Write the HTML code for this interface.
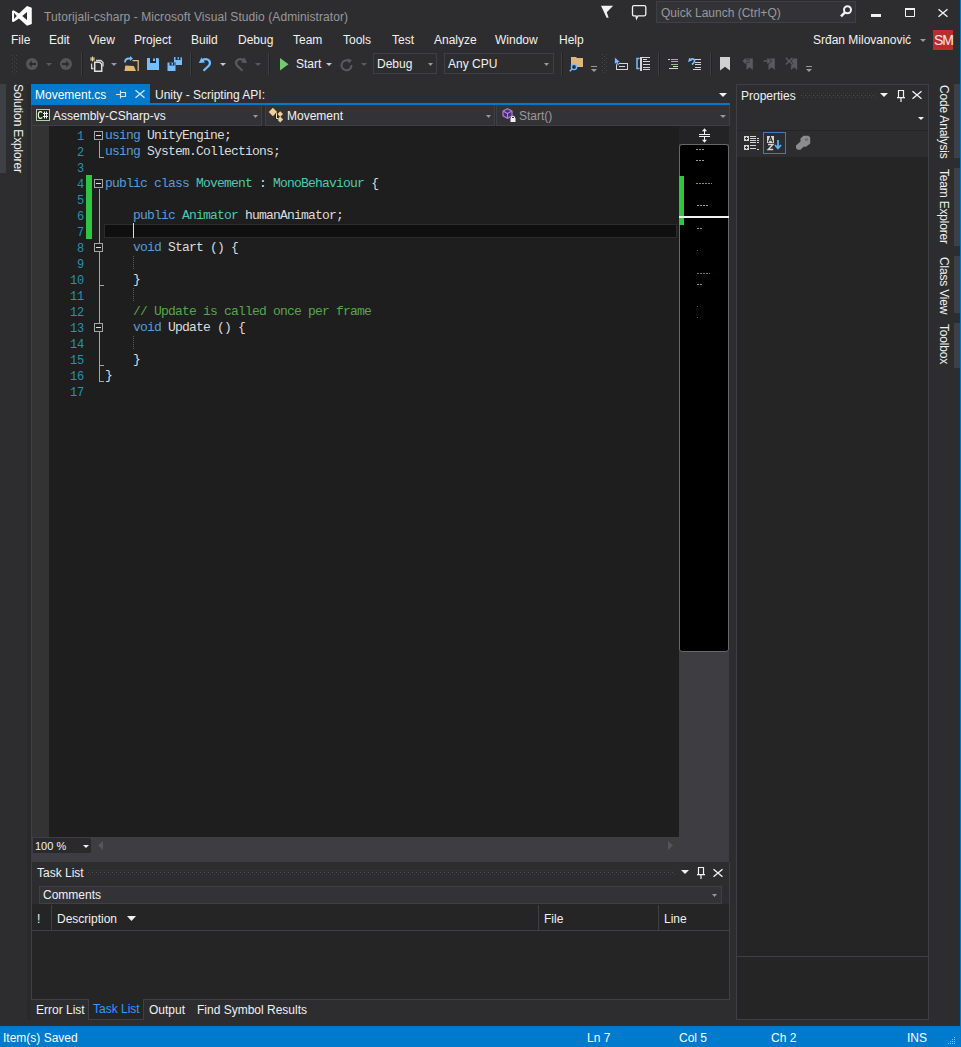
<!DOCTYPE html>
<html><head><meta charset="utf-8">
<style>
*{margin:0;padding:0;box-sizing:border-box}
html,body{width:961px;height:1047px;overflow:hidden;background:#2D2D30}
body{position:relative;font-family:"Liberation Sans",sans-serif;font-size:12px;color:#F1F1F1}
.a{position:absolute}
.t{position:absolute;white-space:pre;line-height:14px;font-size:12px}
svg{position:absolute;overflow:visible}
.code{position:absolute;font-family:"Liberation Mono",monospace;font-size:13px;letter-spacing:-0.8px;line-height:16px;color:#DCDCDC}
.code div{white-space:pre;height:16px}
.kw{color:#569CD6}.ty{color:#4EC9B0}.cm{color:#57A64A}
.ln{position:absolute;font-family:"Liberation Mono",monospace;font-size:12px;letter-spacing:-0.2px;line-height:16px;color:#2B91AF;text-align:right;width:40px;white-space:pre}
.vt{position:absolute;white-space:pre;font-size:12px;line-height:14px;transform-origin:0 0;transform:rotate(90deg)}
</style></head><body>
<svg style="left:10px;top:4px" width="24" height="24" viewBox="0 0 24 24"><path fill="#fff" fill-rule="evenodd" d="M17 2.1L21.75 3.75V20L17 21.75L9 14.5L3.5 18L2 17.5V7L3.5 6.25L9 9.5ZM4.1 8.75V15L6.75 12ZM17 8V16L12.25 12Z"/></svg>
<div class="t" style="left:44px;top:10px;color:#999999;letter-spacing:0.08px">Tutorijali-csharp - Microsoft Visual Studio (Administrator)</div>
<svg style="left:596px;top:0px" width="20" height="20" viewBox="0 0 20 20"><path d="M5 5.8H17.2L10.8 12.3L12.6 17.8H10.6L7.6 11.2Z" fill="#F1F1F1"/></svg>
<svg style="left:630px;top:3px" width="18" height="18" viewBox="0 0 18 18"><path d="M4 2.7H14.3Q15.8 2.7 15.8 4.2V11.3Q15.8 12.8 14.3 12.8H8L6.5 15.6L6 12.8H4Q2.5 12.8 2.5 11.3V4.2Q2.5 2.7 4 2.7Z" fill="none" stroke="#F1F1F1" stroke-width="1.3"/></svg>
<div class="a" style="left:656px;top:1px;width:200px;height:22px;border:1px solid #3F3F46;background:#333337;"></div>
<div class="t" style="left:661px;top:6px;color:#999999;">Quick Launch (Ctrl+Q)</div>
<svg style="left:838px;top:5px" width="15" height="15" viewBox="0 0 15 15"><circle cx="9.5" cy="4.7" r="3.5" fill="none" stroke="#F1F1F1" stroke-width="2"/><path d="M7.2 7.2L3 11.4" stroke="#F1F1F1" stroke-width="2.6"/></svg>
<div class="a" style="left:871px;top:14px;width:10px;height:3px;background:#F1F1F1;"></div>
<svg style="left:905px;top:8px" width="10" height="9" viewBox="0 0 10 9"><path d="M0.5 1V8.5H9.5V1" fill="none" stroke="#F1F1F1" stroke-width="1"/><rect x="0" y="0" width="10" height="2" fill="#F1F1F1"/></svg>
<svg style="left:938px;top:9px" width="10" height="8" viewBox="0 0 10 8"><path d="M0.5 0.3L9.5 7.7M9.5 0.3L0.5 7.7" stroke="#F1F1F1" stroke-width="1.4"/></svg>
<div class="t" style="left:11px;top:33px;color:#F1F1F1;">File</div>
<div class="t" style="left:49px;top:33px;color:#F1F1F1;">Edit</div>
<div class="t" style="left:89px;top:33px;color:#F1F1F1;">View</div>
<div class="t" style="left:134px;top:33px;color:#F1F1F1;">Project</div>
<div class="t" style="left:191px;top:33px;color:#F1F1F1;">Build</div>
<div class="t" style="left:238px;top:33px;color:#F1F1F1;">Debug</div>
<div class="t" style="left:293px;top:33px;color:#F1F1F1;">Team</div>
<div class="t" style="left:343px;top:33px;color:#F1F1F1;">Tools</div>
<div class="t" style="left:392px;top:33px;color:#F1F1F1;">Test</div>
<div class="t" style="left:434px;top:33px;color:#F1F1F1;">Analyze</div>
<div class="t" style="left:495px;top:33px;color:#F1F1F1;">Window</div>
<div class="t" style="left:559px;top:33px;color:#F1F1F1;">Help</div>
<div class="t" style="left:813px;top:33px;color:#F1F1F1;">Srđan Milovanović</div>
<svg style="left:920px;top:39px" width="6" height="3" viewBox="0 0 6 3"><path d="M0 0H6L3.0 3Z" fill="#999999"/></svg>
<div class="a" style="left:933px;top:30px;width:20px;height:20px;background:#BC2C2E;"></div>
<div class="t" style="left:934px;top:32px;color:#F6E9E9;font-size:14px;line-height:16px;letter-spacing:-1.2px">SM</div>
<svg style="left:12px;top:55px" width="5" height="18" viewBox="0 0 5 18"><g fill="#46464A"><rect x="0" y="0" width="1" height="1"/><rect x="2" y="2" width="1" height="1"/><rect x="4" y="0" width="1" height="1"/><rect x="0" y="4" width="1" height="1"/><rect x="2" y="6" width="1" height="1"/><rect x="4" y="4" width="1" height="1"/><rect x="0" y="8" width="1" height="1"/><rect x="2" y="10" width="1" height="1"/><rect x="4" y="8" width="1" height="1"/><rect x="0" y="12" width="1" height="1"/><rect x="2" y="14" width="1" height="1"/><rect x="4" y="12" width="1" height="1"/><rect x="0" y="16" width="1" height="1"/><rect x="2" y="18" width="1" height="1"/><rect x="4" y="16" width="1" height="1"/></g></svg>
<svg style="left:26px;top:58px" width="12" height="12" viewBox="0 0 12 12"><circle cx="6" cy="6" r="6" fill="#555558"/><path d="M2.5 6L6 2.8V9.2Z" fill="#2D2D30"/><rect x="5.5" y="5" width="4.5" height="2" fill="#2D2D30"/></svg>
<svg style="left:46px;top:63px" width="6" height="3" viewBox="0 0 6 3"><path d="M0 0H6L3.0 3Z" fill="#5A5A5E"/></svg>
<svg style="left:60px;top:58px" width="12" height="12" viewBox="0 0 12 12"><circle cx="6" cy="6" r="6" fill="#555558"/><path d="M9.5 6L6 2.8V9.2Z" fill="#2D2D30"/><rect x="2" y="5" width="4.5" height="2" fill="#2D2D30"/></svg>
<div class="a" style="left:81px;top:53px;width:1px;height:22px;background:#3F3F46;"></div>
<div class="a" style="left:82px;top:53px;width:1px;height:22px;background:#222225;"></div>
<svg style="left:89px;top:56px" width="15" height="16" viewBox="0 0 15 16"><path d="M3.5 0.5V5.5M1 3H6M1.7 1.2L5.3 4.8M5.3 1.2L1.7 4.8" stroke="#E8D9A0" stroke-width="1"/><path d="M7 4.5H12L14 6.5V10.5" fill="none" stroke="#D4D4D4" stroke-width="1.3"/><path d="M2.6 7.5V12.5H4.5" fill="none" stroke="#D4D4D4" stroke-width="1.3"/><path d="M5.7 6.3H10.7L12.7 8.3V15.2H5.7Z" fill="#2D2D30" stroke="#E0E0E0" stroke-width="1.5"/></svg>
<svg style="left:111px;top:63px" width="6" height="3" viewBox="0 0 6 3"><path d="M0 0H6L3.0 3Z" fill="#9A94B8"/></svg>
<svg style="left:123px;top:56px" width="16" height="16" viewBox="0 0 16 16"><path d="M2 6.5Q2 2.5 6 2.5H7.5" fill="none" stroke="#75BEFF" stroke-width="1.8"/><path d="M7 0L10 2.5L7 5Z" fill="#75BEFF"/><path d="M9.5 4.6H15.2V15" fill="none" stroke="#DCB67A" stroke-width="1.3"/><path d="M1.5 15L2.3 9.4L10.8 10L13 15Z" fill="#E3B56F"/></svg>
<svg style="left:147px;top:58px" width="12" height="12" viewBox="0 0 12 12"><path d="M0 0H11L12 1V12H0Z" fill="#75BEFF"/><rect x="3" y="0" width="6" height="5" fill="#1E2A38"/><rect x="6" y="0.5" width="2" height="2.5" fill="#75BEFF"/></svg>
<svg style="left:167px;top:57px" width="16" height="14" viewBox="0 0 16 14"><path d="M7 0H14L15 1V8H9V5.5H7Z" fill="#75BEFF"/><rect x="8.5" y="0" width="5" height="3" fill="#1E2A38"/><rect x="10.5" y="0.3" width="1.5" height="2" fill="#75BEFF"/><path d="M0.5 5.5H8.5V14H0.5Z" fill="#75BEFF"/><rect x="2.5" y="5.5" width="5" height="3" fill="#1E2A38"/><rect x="4.5" y="5.8" width="1.5" height="2" fill="#75BEFF"/></svg>
<div class="a" style="left:190px;top:53px;width:1px;height:22px;background:#3F3F46;"></div>
<div class="a" style="left:191px;top:53px;width:1px;height:22px;background:#222225;"></div>
<svg style="left:198px;top:57px" width="14" height="14" viewBox="0 0 14 14"><path d="M4 3.3Q8.5 1 11 3.5Q13 6 11 8.5L5.5 13.8" fill="none" stroke="#75BEFF" stroke-width="2.2"/><path d="M0.8 6L3.5 0.5L7 5.5Z" fill="#75BEFF"/></svg>
<svg style="left:220px;top:63px" width="6" height="3" viewBox="0 0 6 3"><path d="M0 0H6L3.0 3Z" fill="#C8C8C8"/></svg>
<svg style="left:234px;top:57px" width="14" height="14" viewBox="0 0 14 14"><path d="M10 3.3Q5.5 1 3 3.5Q1 6 3 8.5L8.5 13.8" fill="none" stroke="#5A5A5E" stroke-width="2.2"/><path d="M13.2 6L10.5 0.5L7 5.5Z" fill="#5A5A5E"/></svg>
<svg style="left:255px;top:63px" width="6" height="3" viewBox="0 0 6 3"><path d="M0 0H6L3.0 3Z" fill="#5A5A5E"/></svg>
<div class="a" style="left:268px;top:53px;width:1px;height:22px;background:#3F3F46;"></div>
<div class="a" style="left:269px;top:53px;width:1px;height:22px;background:#222225;"></div>
<svg style="left:280px;top:58px" width="9" height="13" viewBox="0 0 9 13"><path d="M0 0L8.5 6.3L0 12.6Z" fill="#78C771"/></svg>
<div class="t" style="left:296px;top:57px;color:#F1F1F1;">Start</div>
<svg style="left:326px;top:63px" width="6" height="3" viewBox="0 0 6 3"><path d="M0 0H6L3.0 3Z" fill="#C8C8C8"/></svg>
<svg style="left:341px;top:58px" width="12" height="13" viewBox="0 0 12 13"><path d="M8.5 3.3A5 5 0 1 0 10.5 7" fill="none" stroke="#5A5A5E" stroke-width="2"/><path d="M6 0.5L11 2L8 5.5Z" fill="#5A5A5E"/></svg>
<svg style="left:361px;top:63px" width="6" height="3" viewBox="0 0 6 3"><path d="M0 0H6L3.0 3Z" fill="#5A5A5E"/></svg>
<div class="a" style="left:373px;top:53px;width:64px;height:21px;border:1px solid #3F3F46;background:#2D2D30;"></div>
<div class="t" style="left:377px;top:57px;color:#F1F1F1;">Debug</div>
<svg style="left:428px;top:63px" width="5" height="3" viewBox="0 0 5 3"><path d="M0 0H5L2.5 3Z" fill="#999999"/></svg>
<div class="a" style="left:444px;top:53px;width:110px;height:21px;border:1px solid #3F3F46;background:#2D2D30;"></div>
<div class="t" style="left:448px;top:57px;color:#F1F1F1;">Any CPU</div>
<svg style="left:544px;top:63px" width="5" height="3" viewBox="0 0 5 3"><path d="M0 0H5L2.5 3Z" fill="#999999"/></svg>
<div class="a" style="left:561px;top:53px;width:1px;height:22px;background:#3F3F46;"></div>
<div class="a" style="left:562px;top:53px;width:1px;height:22px;background:#222225;"></div>
<svg style="left:569px;top:56px" width="15" height="16" viewBox="0 0 15 16"><path d="M2 1H7L8 2H14V11H2Z" fill="#DCB67A"/><circle cx="5" cy="11" r="2.6" fill="#2D2D30" stroke="#75BEFF" stroke-width="1.4"/><path d="M3.2 12.8L0.8 15.2" stroke="#75BEFF" stroke-width="1.6"/></svg>
<svg style="left:591px;top:66px" width="6" height="7" viewBox="0 0 6 7"><rect x="0" y="0" width="6" height="1" fill="#999"/><path d="M0 3H6L3 6Z" fill="#999"/></svg>
<svg style="left:602px;top:54px" width="5" height="19" viewBox="0 0 5 19"><g fill="#46464A"><rect x="0" y="0" width="1" height="1"/><rect x="2" y="2" width="1" height="1"/><rect x="4" y="0" width="1" height="1"/><rect x="0" y="4" width="1" height="1"/><rect x="2" y="6" width="1" height="1"/><rect x="4" y="4" width="1" height="1"/><rect x="0" y="8" width="1" height="1"/><rect x="2" y="10" width="1" height="1"/><rect x="4" y="8" width="1" height="1"/><rect x="0" y="12" width="1" height="1"/><rect x="2" y="14" width="1" height="1"/><rect x="4" y="12" width="1" height="1"/><rect x="0" y="16" width="1" height="1"/><rect x="2" y="18" width="1" height="1"/><rect x="4" y="16" width="1" height="1"/></g></svg>
<svg style="left:614px;top:57px" width="15" height="14" viewBox="0 0 15 14"><rect x="2" y="6" width="12" height="7" fill="#D4D4D4"/><rect x="3" y="7" width="10" height="5" fill="#2D2D30"/><rect x="5" y="9" width="6" height="1" fill="#D4D4D4"/><path d="M0.5 0V7.5L2.4 6L3.6 8.8L5.3 8.1L4.1 5.3H6.6Z" fill="#75BEFF" stroke="#2D2D30" stroke-width="0.7"/></svg>
<svg style="left:636px;top:57px" width="15" height="14" viewBox="0 0 15 14"><path d="M3.5 1.5H1V11.5H3.5" fill="none" stroke="#75BEFF" stroke-width="1.5"/><rect x="4" y="0" width="2" height="14" fill="#D4D4D4"/><g fill="#D4D4D4"><rect x="4" y="0" width="10" height="1"/><rect x="7" y="2" width="4" height="1"/><rect x="7" y="4" width="7" height="1"/><rect x="7" y="7" width="7" height="1"/><rect x="7" y="10" width="7" height="1"/><rect x="7" y="12" width="7" height="1"/></g></svg>
<div class="a" style="left:658px;top:53px;width:1px;height:22px;background:#3F3F46;"></div>
<div class="a" style="left:659px;top:53px;width:1px;height:22px;background:#222225;"></div>
<svg style="left:667px;top:58px" width="12" height="12" viewBox="0 0 12 12"><rect x="1" y="1" width="2" height="1" fill="#D4D4D4"/><g fill="#8DC27A"><rect x="4" y="1" width="7" height="1"/><rect x="4" y="3" width="7" height="1"/><rect x="4" y="6" width="7" height="1"/></g><rect x="6" y="8" width="5" height="1" fill="#D4D4D4"/><rect x="2" y="10" width="9" height="1" fill="#D4D4D4"/></svg>
<svg style="left:688px;top:57px" width="14" height="13" viewBox="0 0 14 13"><path d="M1.5 3.2Q4 0.8 6.2 2.5Q7.5 4.5 4 7.5" fill="none" stroke="#75BEFF" stroke-width="1.7"/><path d="M0 5L1.2 0.8L4.2 3.6Z" fill="#75BEFF"/><g fill="#D4D4D4"><rect x="7" y="2" width="6" height="1"/><rect x="7" y="5" width="6" height="1"/><rect x="7" y="7" width="6" height="1"/><rect x="7" y="10" width="6" height="1"/><rect x="5" y="12" width="8" height="1"/></g></svg>
<div class="a" style="left:710px;top:53px;width:1px;height:22px;background:#3F3F46;"></div>
<div class="a" style="left:711px;top:53px;width:1px;height:22px;background:#222225;"></div>
<svg style="left:720px;top:57px" width="10" height="14" viewBox="0 0 10 14"><path d="M0 0H10V13.5L5 9.8L0 13.5Z" fill="#D0D0D0"/></svg>
<svg style="left:742px;top:57px" width="12" height="14" viewBox="0 0 12 14"><path d="M4.5 1.5H10.8V13L7.6 10.3L4.5 13Z" fill="#5A5A5E"/><path d="M8 4H1.8M4.2 1.6L1.6 4L4.2 6.4" fill="none" stroke="#2D2D30" stroke-width="3"/><path d="M8 4H1.8M4.2 1.6L1.6 4L4.2 6.4" fill="none" stroke="#5A5A5E" stroke-width="1.6"/></svg>
<svg style="left:763px;top:57px" width="12" height="14" viewBox="0 0 12 14"><path d="M5.5 1.5H11.8V13L8.6 10.3L5.5 13Z" fill="#5A5A5E"/><path d="M0.5 4H6.7M4.3 1.6L6.9 4L4.3 6.4" fill="none" stroke="#2D2D30" stroke-width="3"/><path d="M0.5 4H6.7M4.3 1.6L6.9 4L4.3 6.4" fill="none" stroke="#5A5A5E" stroke-width="1.6"/></svg>
<svg style="left:785px;top:57px" width="13" height="14" viewBox="0 0 13 14"><path d="M6 1.5H12.2V13L9.1 10.3L6 13Z" fill="#5A5A5E"/><path d="M0.8 0.8L7.5 7.5M7.5 0.8L0.8 7.5" fill="none" stroke="#2D2D30" stroke-width="3"/><path d="M0.8 0.8L7.5 7.5M7.5 0.8L0.8 7.5" fill="none" stroke="#5A5A5E" stroke-width="1.5"/></svg>
<svg style="left:806px;top:66px" width="6" height="7" viewBox="0 0 6 7"><rect x="0" y="0" width="6" height="1" fill="#999"/><path d="M0 3H6L3 6Z" fill="#999"/></svg>
<div class="a" style="left:0px;top:84px;width:6px;height:89px;background:#3F3F46;"></div>
<div class="vt" style="left:25px;top:84px;color:#F1F1F1;letter-spacing:-0.15px">Solution Explorer</div>
<div class="a" style="left:31px;top:84px;width:119px;height:19px;background:#007ACC;"></div>
<div class="a" style="left:31px;top:103px;width:699px;height:2px;background:#007ACC;"></div>
<div class="t" style="left:35px;top:88px;color:#FFFFFF;">Movement.cs</div>
<svg style="left:116px;top:90px" width="10" height="9" viewBox="0 0 10 9"><path d="M0 4.5H4M4.5 0.5V8.5M4.5 2.5H9.5V6.5H4.5" fill="none" stroke="#D0E6F5" stroke-width="1.2"/></svg>
<svg style="left:135px;top:90px" width="10" height="8" viewBox="0 0 10 8"><path d="M0.5 0.3L9.5 7.7M9.5 0.3L0.5 7.7" stroke="#D0E6F5" stroke-width="1.4"/></svg>
<div class="t" style="left:155px;top:88px;color:#F1F1F1;">Unity - Scripting API:</div>
<svg style="left:719px;top:93px" width="8" height="4" viewBox="0 0 8 4"><path d="M0 0H8L4.0 4Z" fill="#F1F1F1"/></svg>
<div class="a" style="left:31px;top:105px;width:231px;height:21px;background:#333337;"></div>
<div class="a" style="left:261px;top:105px;width:1px;height:21px;background:#3F3F46;"></div>
<div class="a" style="left:31px;top:125px;width:231px;height:1px;background:#3F3F46;"></div>
<div class="a" style="left:31px;top:105px;width:1px;height:21px;background:#3F3F46;"></div>
<div class="a" style="left:265px;top:105px;width:230px;height:21px;background:#333337;"></div>
<div class="a" style="left:494px;top:105px;width:1px;height:21px;background:#3F3F46;"></div>
<div class="a" style="left:265px;top:125px;width:230px;height:1px;background:#3F3F46;"></div>
<div class="a" style="left:265px;top:105px;width:1px;height:21px;background:#3F3F46;"></div>
<div class="a" style="left:496px;top:105px;width:234px;height:21px;background:#333337;"></div>
<div class="a" style="left:729px;top:105px;width:1px;height:21px;background:#3F3F46;"></div>
<div class="a" style="left:496px;top:125px;width:234px;height:1px;background:#3F3F46;"></div>
<div class="a" style="left:496px;top:105px;width:1px;height:21px;background:#3F3F46;"></div>
<svg style="left:36px;top:109px" width="14" height="12" viewBox="0 0 14 12"><rect x="0.5" y="0.5" width="13" height="11" fill="#1F2B1F" stroke="#B3D3A5" stroke-width="1"/><path d="M6.3 3.6Q5.5 2.6 4.3 2.6Q2.3 2.6 2.3 6Q2.3 9.4 4.3 9.4Q5.5 9.4 6.3 8.4" fill="none" stroke="#F1F1F1" stroke-width="1.1"/><path d="M8.5 2.5V9.5M10.5 2.5V9.5M7 4.5H12M7 7.5H12" stroke="#F1F1F1" stroke-width="1"/></svg>
<div class="t" style="left:53px;top:109px;color:#F1F1F1;">Assembly-CSharp-vs</div>
<svg style="left:253px;top:115px" width="5" height="3" viewBox="0 0 5 3"><path d="M0 0H5L2.5 3Z" fill="#999999"/></svg>
<svg style="left:264px;top:106px" width="22" height="20" viewBox="0 0 22 20"><g fill="#EFCF95"><path d="M8.9 1.8L13.1 6L8.9 10.2L4.7 6Z"/><path d="M16.2 5.3L19 8.1L16.2 10.9L13.4 8.1Z"/><path d="M16.2 10.6L19.1 13.5L16.2 16.4L13.3 13.5Z"/></g><path d="M12.5 7.2V12.5H14.5" fill="none" stroke="#1E1E1E" stroke-width="2.2"/><path d="M12.5 7.2V12.5H14.5" fill="none" stroke="#F1E6C8" stroke-width="1"/></svg>
<div class="t" style="left:287px;top:109px;color:#F1F1F1;">Movement</div>
<svg style="left:486px;top:115px" width="5" height="3" viewBox="0 0 5 3"><path d="M0 0H5L2.5 3Z" fill="#999999"/></svg>
<svg style="left:502px;top:108px" width="16" height="15" viewBox="0 0 16 15"><path d="M5.5 0.7L10 3V8L5.5 10.3L1 8V3Z" fill="#4B2A7A" stroke="#B180D7" stroke-width="1.2"/><path d="M1.5 3.3L5.5 5.5L9.5 3.3M5.5 5.5V10" fill="none" stroke="#B180D7" stroke-width="1.1"/><rect x="8.5" y="10" width="5" height="4" fill="#F1F1F1"/><path d="M9.5 10V8.8Q11 7.5 12.5 8.8V10" fill="none" stroke="#F1F1F1" stroke-width="1"/></svg>
<div class="t" style="left:519px;top:109px;color:#999999;">Start()</div>
<svg style="left:720px;top:115px" width="6" height="3" viewBox="0 0 6 3"><path d="M0 0H6L3.0 3Z" fill="#999999"/></svg>
<div class="a" style="left:31px;top:126px;width:648px;height:711px;background:#1E1E1E;"></div>
<div class="a" style="left:31px;top:126px;width:18px;height:711px;background:#333333;"></div>
<div class="a" style="left:31px;top:126px;width:1px;height:711px;background:#3F3F46;"></div>
<div class="a" style="left:27px;top:84px;width:4px;height:936px;background:#29292C;"></div>
<div class="a" style="left:104px;top:224px;width:573px;height:14px;background:#0F0F0F;border:1px solid #2C2C2C"></div>
<div class="a" style="left:133px;top:223px;width:1px;height:15px;background:#DCDCDC;"></div>
<div class="a" style="left:86px;top:175px;width:6px;height:64px;background:#2CC640;"></div>
<div class="a" style="left:99px;top:141px;width:1px;height:17px;background:#A5A5A5;"></div>
<div class="a" style="left:99px;top:157px;width:5px;height:1px;background:#A5A5A5;"></div>
<svg style="left:94px;top:131px" width="9" height="9" viewBox="0 0 9 9"><rect x="0.5" y="0.5" width="8" height="8" fill="#1E1E1E" stroke="#A5A5A5" stroke-width="1"/><rect x="2" y="4" width="5" height="1" fill="#E0E0E0"/></svg>
<div class="a" style="left:99px;top:189px;width:1px;height:193px;background:#A5A5A5;"></div>
<div class="a" style="left:99px;top:381px;width:5px;height:1px;background:#A5A5A5;"></div>
<div class="a" style="left:99px;top:285px;width:5px;height:1px;background:#A5A5A5;"></div>
<div class="a" style="left:99px;top:365px;width:5px;height:1px;background:#A5A5A5;"></div>
<svg style="left:94px;top:179px" width="9" height="9" viewBox="0 0 9 9"><rect x="0.5" y="0.5" width="8" height="8" fill="#1E1E1E" stroke="#A5A5A5" stroke-width="1"/><rect x="2" y="4" width="5" height="1" fill="#E0E0E0"/></svg>
<svg style="left:94px;top:243px" width="9" height="9" viewBox="0 0 9 9"><rect x="0.5" y="0.5" width="8" height="8" fill="#1E1E1E" stroke="#A5A5A5" stroke-width="1"/><rect x="2" y="4" width="5" height="1" fill="#E0E0E0"/></svg>
<svg style="left:94px;top:323px" width="9" height="9" viewBox="0 0 9 9"><rect x="0.5" y="0.5" width="8" height="8" fill="#1E1E1E" stroke="#A5A5A5" stroke-width="1"/><rect x="2" y="4" width="5" height="1" fill="#E0E0E0"/></svg>
<svg style="left:133px;top:256px" width="1" height="14" viewBox="0 0 1 14"><g fill="#5A5A5A"><rect x="0" y="0" width="1" height="1"/><rect x="0" y="2" width="1" height="1"/><rect x="0" y="4" width="1" height="1"/><rect x="0" y="6" width="1" height="1"/><rect x="0" y="8" width="1" height="1"/><rect x="0" y="10" width="1" height="1"/><rect x="0" y="12" width="1" height="1"/></g></svg>
<svg style="left:133px;top:288px" width="1" height="14" viewBox="0 0 1 14"><g fill="#5A5A5A"><rect x="0" y="0" width="1" height="1"/><rect x="0" y="2" width="1" height="1"/><rect x="0" y="4" width="1" height="1"/><rect x="0" y="6" width="1" height="1"/><rect x="0" y="8" width="1" height="1"/><rect x="0" y="10" width="1" height="1"/><rect x="0" y="12" width="1" height="1"/></g></svg>
<svg style="left:133px;top:336px" width="1" height="14" viewBox="0 0 1 14"><g fill="#5A5A5A"><rect x="0" y="0" width="1" height="1"/><rect x="0" y="2" width="1" height="1"/><rect x="0" y="4" width="1" height="1"/><rect x="0" y="6" width="1" height="1"/><rect x="0" y="8" width="1" height="1"/><rect x="0" y="10" width="1" height="1"/><rect x="0" y="12" width="1" height="1"/></g></svg>
<div class="ln" style="left:44px;top:129px">1</div>
<div class="ln" style="left:44px;top:145px">2</div>
<div class="ln" style="left:44px;top:161px">3</div>
<div class="ln" style="left:44px;top:177px">4</div>
<div class="ln" style="left:44px;top:193px">5</div>
<div class="ln" style="left:44px;top:209px">6</div>
<div class="ln" style="left:44px;top:225px">7</div>
<div class="ln" style="left:44px;top:241px">8</div>
<div class="ln" style="left:44px;top:257px">9</div>
<div class="ln" style="left:44px;top:273px">10</div>
<div class="ln" style="left:44px;top:289px">11</div>
<div class="ln" style="left:44px;top:305px">12</div>
<div class="ln" style="left:44px;top:321px">13</div>
<div class="ln" style="left:44px;top:337px">14</div>
<div class="ln" style="left:44px;top:353px">15</div>
<div class="ln" style="left:44px;top:369px">16</div>
<div class="ln" style="left:44px;top:385px">17</div>
<div class="code" style="left:105px;top:128px">
<div><span class="kw">using</span> UnityEngine;</div>
<div><span class="kw">using</span> System.Collections;</div>
<div> </div>
<div><span class="kw">public</span> <span class="kw">class</span> <span class="ty">Movement</span> : <span class="ty">MonoBehaviour</span> {</div>
<div> </div>
<div>    <span class="kw">public</span> <span class="ty">Animator</span> humanAnimator;</div>
<div> </div>
<div>    <span class="kw">void</span> Start () {</div>
<div> </div>
<div>    }</div>
<div> </div>
<div>    <span class="cm">// Update is called once per frame</span></div>
<div>    <span class="kw">void</span> Update () {</div>
<div> </div>
<div>    }</div>
<div>}</div>
</div>
<div class="a" style="left:679px;top:126px;width:50px;height:711px;background:#3E3E42;"></div>
<div class="a" style="left:679px;top:126px;width:50px;height:18px;background:#232325;"></div>
<svg style="left:699px;top:128px" width="11" height="15" viewBox="0 0 11 15"><g fill="#F1F1F1"><rect x="0" y="6" width="11" height="1"/><rect x="0" y="8" width="11" height="1"/><rect x="5" y="2" width="1" height="4"/><rect x="5" y="9" width="1" height="4"/><path d="M5.5 0.3L8 3.3H3Z"/><path d="M5.5 14.7L8 11.7H3Z"/></g></svg>
<div class="a" style="left:679px;top:144px;width:50px;height:508px;background:#000000;border:1px solid #68686C;border-radius:3px"></div>
<div class="a" style="left:679px;top:176px;width:5px;height:49px;background:#2CC640;"></div>
<div class="a" style="left:679px;top:216px;width:50px;height:2px;background:#F1F1F1;"></div>
<svg style="left:696px;top:149px" width="8" height="1" viewBox="0 0 8 1"><g fill="#9A9A9A"><rect x="0" y="0" width="1" height="1"/><rect x="1" y="0" width="1" height="1"/><rect x="3" y="0" width="1" height="1"/><rect x="4" y="0" width="1" height="1"/><rect x="6" y="0" width="1" height="1"/><rect x="7" y="0" width="1" height="1"/></g></svg>
<svg style="left:696px;top:160px" width="9" height="1" viewBox="0 0 9 1"><g fill="#9A9A9A"><rect x="0" y="0" width="1" height="1"/><rect x="1" y="0" width="1" height="1"/><rect x="3" y="0" width="1" height="1"/><rect x="4" y="0" width="1" height="1"/><rect x="6" y="0" width="1" height="1"/><rect x="7" y="0" width="1" height="1"/></g></svg>
<svg style="left:696px;top:183px" width="16" height="1" viewBox="0 0 16 1"><g fill="#5F9C8C"><rect x="0" y="0" width="1" height="1"/><rect x="1" y="0" width="1" height="1"/><rect x="3" y="0" width="1" height="1"/><rect x="4" y="0" width="1" height="1"/><rect x="6" y="0" width="1" height="1"/><rect x="7" y="0" width="1" height="1"/><rect x="9" y="0" width="1" height="1"/><rect x="10" y="0" width="1" height="1"/><rect x="12" y="0" width="1" height="1"/><rect x="13" y="0" width="1" height="1"/><rect x="15" y="0" width="1" height="1"/></g></svg>
<svg style="left:697px;top:205px" width="11" height="1" viewBox="0 0 11 1"><g fill="#9A9A9A"><rect x="0" y="0" width="1" height="1"/><rect x="1" y="0" width="1" height="1"/><rect x="3" y="0" width="1" height="1"/><rect x="4" y="0" width="1" height="1"/><rect x="6" y="0" width="1" height="1"/><rect x="7" y="0" width="1" height="1"/><rect x="9" y="0" width="1" height="1"/><rect x="10" y="0" width="1" height="1"/></g></svg>
<svg style="left:697px;top:228px" width="5" height="1" viewBox="0 0 5 1"><g fill="#9A9A9A"><rect x="0" y="0" width="1" height="1"/><rect x="1" y="0" width="1" height="1"/><rect x="3" y="0" width="1" height="1"/><rect x="4" y="0" width="1" height="1"/></g></svg>
<svg style="left:697px;top:250px" width="1" height="1" viewBox="0 0 1 1"><g fill="#666"><rect x="0" y="0" width="1" height="1"/></g></svg>
<svg style="left:697px;top:273px" width="13" height="1" viewBox="0 0 13 1"><g fill="#4F8A45"><rect x="0" y="0" width="1" height="1"/><rect x="1" y="0" width="1" height="1"/><rect x="3" y="0" width="1" height="1"/><rect x="4" y="0" width="1" height="1"/><rect x="6" y="0" width="1" height="1"/><rect x="7" y="0" width="1" height="1"/><rect x="9" y="0" width="1" height="1"/><rect x="10" y="0" width="1" height="1"/><rect x="12" y="0" width="1" height="1"/></g></svg>
<svg style="left:697px;top:284px" width="6" height="1" viewBox="0 0 6 1"><g fill="#9A9A9A"><rect x="0" y="0" width="1" height="1"/><rect x="1" y="0" width="1" height="1"/><rect x="3" y="0" width="1" height="1"/><rect x="4" y="0" width="1" height="1"/></g></svg>
<svg style="left:697px;top:306px" width="1" height="1" viewBox="0 0 1 1"><g fill="#666"><rect x="0" y="0" width="1" height="1"/></g></svg>
<svg style="left:697px;top:317px" width="1" height="1" viewBox="0 0 1 1"><g fill="#666"><rect x="0" y="0" width="1" height="1"/></g></svg>
<div class="a" style="left:31px;top:837px;width:698px;height:25px;background:#3E3E42;"></div>
<div class="a" style="left:31px;top:854px;width:698px;height:8px;background:#3D3D43;"></div>
<div class="a" style="left:33px;top:838px;width:58px;height:15px;background:#2A2A2D;"></div>
<div class="t" style="left:35px;top:839px;color:#F1F1F1;font-size:11px">100 %</div>
<svg style="left:83px;top:845px" width="6" height="3" viewBox="0 0 6 3"><path d="M0 0H6L3.0 3Z" fill="#F1F1F1"/></svg>
<svg style="left:98px;top:841px" width="5" height="9" viewBox="0 0 5 9"><path d="M5 0V9L0 4.5Z" fill="#55555A"/></svg>
<svg style="left:668px;top:841px" width="5" height="9" viewBox="0 0 5 9"><path d="M0 0V9L5 4.5Z" fill="#55555A"/></svg>
<div class="a" style="left:31px;top:862px;width:698px;height:137px;background:#252526;"></div>
<div class="a" style="left:31px;top:862px;width:698px;height:21px;background:#2D2D30;"></div>
<div class="a" style="left:31px;top:862px;width:699px;height:138px;border:1px solid #3F3F46;background:transparent;border-top-color:#2D2D30"></div>
<div class="t" style="left:37px;top:866px;color:#F1F1F1;">Task List</div>
<svg style="left:88px;top:870px" width="588" height="5" viewBox="0 0 588 5"><rect x="2" y="0" width="1" height="1" fill="#3A3A3F"/><rect x="0" y="2" width="1" height="1" fill="#505055"/><rect x="2" y="4" width="1" height="1" fill="#414146"/><rect x="6" y="0" width="1" height="1" fill="#3A3A3F"/><rect x="4" y="2" width="1" height="1" fill="#505055"/><rect x="6" y="4" width="1" height="1" fill="#414146"/><rect x="10" y="0" width="1" height="1" fill="#3A3A3F"/><rect x="8" y="2" width="1" height="1" fill="#505055"/><rect x="10" y="4" width="1" height="1" fill="#414146"/><rect x="14" y="0" width="1" height="1" fill="#3A3A3F"/><rect x="12" y="2" width="1" height="1" fill="#505055"/><rect x="14" y="4" width="1" height="1" fill="#414146"/><rect x="18" y="0" width="1" height="1" fill="#3A3A3F"/><rect x="16" y="2" width="1" height="1" fill="#505055"/><rect x="18" y="4" width="1" height="1" fill="#414146"/><rect x="22" y="0" width="1" height="1" fill="#3A3A3F"/><rect x="20" y="2" width="1" height="1" fill="#505055"/><rect x="22" y="4" width="1" height="1" fill="#414146"/><rect x="26" y="0" width="1" height="1" fill="#3A3A3F"/><rect x="24" y="2" width="1" height="1" fill="#505055"/><rect x="26" y="4" width="1" height="1" fill="#414146"/><rect x="30" y="0" width="1" height="1" fill="#3A3A3F"/><rect x="28" y="2" width="1" height="1" fill="#505055"/><rect x="30" y="4" width="1" height="1" fill="#414146"/><rect x="34" y="0" width="1" height="1" fill="#3A3A3F"/><rect x="32" y="2" width="1" height="1" fill="#505055"/><rect x="34" y="4" width="1" height="1" fill="#414146"/><rect x="38" y="0" width="1" height="1" fill="#3A3A3F"/><rect x="36" y="2" width="1" height="1" fill="#505055"/><rect x="38" y="4" width="1" height="1" fill="#414146"/><rect x="42" y="0" width="1" height="1" fill="#3A3A3F"/><rect x="40" y="2" width="1" height="1" fill="#505055"/><rect x="42" y="4" width="1" height="1" fill="#414146"/><rect x="46" y="0" width="1" height="1" fill="#3A3A3F"/><rect x="44" y="2" width="1" height="1" fill="#505055"/><rect x="46" y="4" width="1" height="1" fill="#414146"/><rect x="50" y="0" width="1" height="1" fill="#3A3A3F"/><rect x="48" y="2" width="1" height="1" fill="#505055"/><rect x="50" y="4" width="1" height="1" fill="#414146"/><rect x="54" y="0" width="1" height="1" fill="#3A3A3F"/><rect x="52" y="2" width="1" height="1" fill="#505055"/><rect x="54" y="4" width="1" height="1" fill="#414146"/><rect x="58" y="0" width="1" height="1" fill="#3A3A3F"/><rect x="56" y="2" width="1" height="1" fill="#505055"/><rect x="58" y="4" width="1" height="1" fill="#414146"/><rect x="62" y="0" width="1" height="1" fill="#3A3A3F"/><rect x="60" y="2" width="1" height="1" fill="#505055"/><rect x="62" y="4" width="1" height="1" fill="#414146"/><rect x="66" y="0" width="1" height="1" fill="#3A3A3F"/><rect x="64" y="2" width="1" height="1" fill="#505055"/><rect x="66" y="4" width="1" height="1" fill="#414146"/><rect x="70" y="0" width="1" height="1" fill="#3A3A3F"/><rect x="68" y="2" width="1" height="1" fill="#505055"/><rect x="70" y="4" width="1" height="1" fill="#414146"/><rect x="74" y="0" width="1" height="1" fill="#3A3A3F"/><rect x="72" y="2" width="1" height="1" fill="#505055"/><rect x="74" y="4" width="1" height="1" fill="#414146"/><rect x="78" y="0" width="1" height="1" fill="#3A3A3F"/><rect x="76" y="2" width="1" height="1" fill="#505055"/><rect x="78" y="4" width="1" height="1" fill="#414146"/><rect x="82" y="0" width="1" height="1" fill="#3A3A3F"/><rect x="80" y="2" width="1" height="1" fill="#505055"/><rect x="82" y="4" width="1" height="1" fill="#414146"/><rect x="86" y="0" width="1" height="1" fill="#3A3A3F"/><rect x="84" y="2" width="1" height="1" fill="#505055"/><rect x="86" y="4" width="1" height="1" fill="#414146"/><rect x="90" y="0" width="1" height="1" fill="#3A3A3F"/><rect x="88" y="2" width="1" height="1" fill="#505055"/><rect x="90" y="4" width="1" height="1" fill="#414146"/><rect x="94" y="0" width="1" height="1" fill="#3A3A3F"/><rect x="92" y="2" width="1" height="1" fill="#505055"/><rect x="94" y="4" width="1" height="1" fill="#414146"/><rect x="98" y="0" width="1" height="1" fill="#3A3A3F"/><rect x="96" y="2" width="1" height="1" fill="#505055"/><rect x="98" y="4" width="1" height="1" fill="#414146"/><rect x="102" y="0" width="1" height="1" fill="#3A3A3F"/><rect x="100" y="2" width="1" height="1" fill="#505055"/><rect x="102" y="4" width="1" height="1" fill="#414146"/><rect x="106" y="0" width="1" height="1" fill="#3A3A3F"/><rect x="104" y="2" width="1" height="1" fill="#505055"/><rect x="106" y="4" width="1" height="1" fill="#414146"/><rect x="110" y="0" width="1" height="1" fill="#3A3A3F"/><rect x="108" y="2" width="1" height="1" fill="#505055"/><rect x="110" y="4" width="1" height="1" fill="#414146"/><rect x="114" y="0" width="1" height="1" fill="#3A3A3F"/><rect x="112" y="2" width="1" height="1" fill="#505055"/><rect x="114" y="4" width="1" height="1" fill="#414146"/><rect x="118" y="0" width="1" height="1" fill="#3A3A3F"/><rect x="116" y="2" width="1" height="1" fill="#505055"/><rect x="118" y="4" width="1" height="1" fill="#414146"/><rect x="122" y="0" width="1" height="1" fill="#3A3A3F"/><rect x="120" y="2" width="1" height="1" fill="#505055"/><rect x="122" y="4" width="1" height="1" fill="#414146"/><rect x="126" y="0" width="1" height="1" fill="#3A3A3F"/><rect x="124" y="2" width="1" height="1" fill="#505055"/><rect x="126" y="4" width="1" height="1" fill="#414146"/><rect x="130" y="0" width="1" height="1" fill="#3A3A3F"/><rect x="128" y="2" width="1" height="1" fill="#505055"/><rect x="130" y="4" width="1" height="1" fill="#414146"/><rect x="134" y="0" width="1" height="1" fill="#3A3A3F"/><rect x="132" y="2" width="1" height="1" fill="#505055"/><rect x="134" y="4" width="1" height="1" fill="#414146"/><rect x="138" y="0" width="1" height="1" fill="#3A3A3F"/><rect x="136" y="2" width="1" height="1" fill="#505055"/><rect x="138" y="4" width="1" height="1" fill="#414146"/><rect x="142" y="0" width="1" height="1" fill="#3A3A3F"/><rect x="140" y="2" width="1" height="1" fill="#505055"/><rect x="142" y="4" width="1" height="1" fill="#414146"/><rect x="146" y="0" width="1" height="1" fill="#3A3A3F"/><rect x="144" y="2" width="1" height="1" fill="#505055"/><rect x="146" y="4" width="1" height="1" fill="#414146"/><rect x="150" y="0" width="1" height="1" fill="#3A3A3F"/><rect x="148" y="2" width="1" height="1" fill="#505055"/><rect x="150" y="4" width="1" height="1" fill="#414146"/><rect x="154" y="0" width="1" height="1" fill="#3A3A3F"/><rect x="152" y="2" width="1" height="1" fill="#505055"/><rect x="154" y="4" width="1" height="1" fill="#414146"/><rect x="158" y="0" width="1" height="1" fill="#3A3A3F"/><rect x="156" y="2" width="1" height="1" fill="#505055"/><rect x="158" y="4" width="1" height="1" fill="#414146"/><rect x="162" y="0" width="1" height="1" fill="#3A3A3F"/><rect x="160" y="2" width="1" height="1" fill="#505055"/><rect x="162" y="4" width="1" height="1" fill="#414146"/><rect x="166" y="0" width="1" height="1" fill="#3A3A3F"/><rect x="164" y="2" width="1" height="1" fill="#505055"/><rect x="166" y="4" width="1" height="1" fill="#414146"/><rect x="170" y="0" width="1" height="1" fill="#3A3A3F"/><rect x="168" y="2" width="1" height="1" fill="#505055"/><rect x="170" y="4" width="1" height="1" fill="#414146"/><rect x="174" y="0" width="1" height="1" fill="#3A3A3F"/><rect x="172" y="2" width="1" height="1" fill="#505055"/><rect x="174" y="4" width="1" height="1" fill="#414146"/><rect x="178" y="0" width="1" height="1" fill="#3A3A3F"/><rect x="176" y="2" width="1" height="1" fill="#505055"/><rect x="178" y="4" width="1" height="1" fill="#414146"/><rect x="182" y="0" width="1" height="1" fill="#3A3A3F"/><rect x="180" y="2" width="1" height="1" fill="#505055"/><rect x="182" y="4" width="1" height="1" fill="#414146"/><rect x="186" y="0" width="1" height="1" fill="#3A3A3F"/><rect x="184" y="2" width="1" height="1" fill="#505055"/><rect x="186" y="4" width="1" height="1" fill="#414146"/><rect x="190" y="0" width="1" height="1" fill="#3A3A3F"/><rect x="188" y="2" width="1" height="1" fill="#505055"/><rect x="190" y="4" width="1" height="1" fill="#414146"/><rect x="194" y="0" width="1" height="1" fill="#3A3A3F"/><rect x="192" y="2" width="1" height="1" fill="#505055"/><rect x="194" y="4" width="1" height="1" fill="#414146"/><rect x="198" y="0" width="1" height="1" fill="#3A3A3F"/><rect x="196" y="2" width="1" height="1" fill="#505055"/><rect x="198" y="4" width="1" height="1" fill="#414146"/><rect x="202" y="0" width="1" height="1" fill="#3A3A3F"/><rect x="200" y="2" width="1" height="1" fill="#505055"/><rect x="202" y="4" width="1" height="1" fill="#414146"/><rect x="206" y="0" width="1" height="1" fill="#3A3A3F"/><rect x="204" y="2" width="1" height="1" fill="#505055"/><rect x="206" y="4" width="1" height="1" fill="#414146"/><rect x="210" y="0" width="1" height="1" fill="#3A3A3F"/><rect x="208" y="2" width="1" height="1" fill="#505055"/><rect x="210" y="4" width="1" height="1" fill="#414146"/><rect x="214" y="0" width="1" height="1" fill="#3A3A3F"/><rect x="212" y="2" width="1" height="1" fill="#505055"/><rect x="214" y="4" width="1" height="1" fill="#414146"/><rect x="218" y="0" width="1" height="1" fill="#3A3A3F"/><rect x="216" y="2" width="1" height="1" fill="#505055"/><rect x="218" y="4" width="1" height="1" fill="#414146"/><rect x="222" y="0" width="1" height="1" fill="#3A3A3F"/><rect x="220" y="2" width="1" height="1" fill="#505055"/><rect x="222" y="4" width="1" height="1" fill="#414146"/><rect x="226" y="0" width="1" height="1" fill="#3A3A3F"/><rect x="224" y="2" width="1" height="1" fill="#505055"/><rect x="226" y="4" width="1" height="1" fill="#414146"/><rect x="230" y="0" width="1" height="1" fill="#3A3A3F"/><rect x="228" y="2" width="1" height="1" fill="#505055"/><rect x="230" y="4" width="1" height="1" fill="#414146"/><rect x="234" y="0" width="1" height="1" fill="#3A3A3F"/><rect x="232" y="2" width="1" height="1" fill="#505055"/><rect x="234" y="4" width="1" height="1" fill="#414146"/><rect x="238" y="0" width="1" height="1" fill="#3A3A3F"/><rect x="236" y="2" width="1" height="1" fill="#505055"/><rect x="238" y="4" width="1" height="1" fill="#414146"/><rect x="242" y="0" width="1" height="1" fill="#3A3A3F"/><rect x="240" y="2" width="1" height="1" fill="#505055"/><rect x="242" y="4" width="1" height="1" fill="#414146"/><rect x="246" y="0" width="1" height="1" fill="#3A3A3F"/><rect x="244" y="2" width="1" height="1" fill="#505055"/><rect x="246" y="4" width="1" height="1" fill="#414146"/><rect x="250" y="0" width="1" height="1" fill="#3A3A3F"/><rect x="248" y="2" width="1" height="1" fill="#505055"/><rect x="250" y="4" width="1" height="1" fill="#414146"/><rect x="254" y="0" width="1" height="1" fill="#3A3A3F"/><rect x="252" y="2" width="1" height="1" fill="#505055"/><rect x="254" y="4" width="1" height="1" fill="#414146"/><rect x="258" y="0" width="1" height="1" fill="#3A3A3F"/><rect x="256" y="2" width="1" height="1" fill="#505055"/><rect x="258" y="4" width="1" height="1" fill="#414146"/><rect x="262" y="0" width="1" height="1" fill="#3A3A3F"/><rect x="260" y="2" width="1" height="1" fill="#505055"/><rect x="262" y="4" width="1" height="1" fill="#414146"/><rect x="266" y="0" width="1" height="1" fill="#3A3A3F"/><rect x="264" y="2" width="1" height="1" fill="#505055"/><rect x="266" y="4" width="1" height="1" fill="#414146"/><rect x="270" y="0" width="1" height="1" fill="#3A3A3F"/><rect x="268" y="2" width="1" height="1" fill="#505055"/><rect x="270" y="4" width="1" height="1" fill="#414146"/><rect x="274" y="0" width="1" height="1" fill="#3A3A3F"/><rect x="272" y="2" width="1" height="1" fill="#505055"/><rect x="274" y="4" width="1" height="1" fill="#414146"/><rect x="278" y="0" width="1" height="1" fill="#3A3A3F"/><rect x="276" y="2" width="1" height="1" fill="#505055"/><rect x="278" y="4" width="1" height="1" fill="#414146"/><rect x="282" y="0" width="1" height="1" fill="#3A3A3F"/><rect x="280" y="2" width="1" height="1" fill="#505055"/><rect x="282" y="4" width="1" height="1" fill="#414146"/><rect x="286" y="0" width="1" height="1" fill="#3A3A3F"/><rect x="284" y="2" width="1" height="1" fill="#505055"/><rect x="286" y="4" width="1" height="1" fill="#414146"/><rect x="290" y="0" width="1" height="1" fill="#3A3A3F"/><rect x="288" y="2" width="1" height="1" fill="#505055"/><rect x="290" y="4" width="1" height="1" fill="#414146"/><rect x="294" y="0" width="1" height="1" fill="#3A3A3F"/><rect x="292" y="2" width="1" height="1" fill="#505055"/><rect x="294" y="4" width="1" height="1" fill="#414146"/><rect x="298" y="0" width="1" height="1" fill="#3A3A3F"/><rect x="296" y="2" width="1" height="1" fill="#505055"/><rect x="298" y="4" width="1" height="1" fill="#414146"/><rect x="302" y="0" width="1" height="1" fill="#3A3A3F"/><rect x="300" y="2" width="1" height="1" fill="#505055"/><rect x="302" y="4" width="1" height="1" fill="#414146"/><rect x="306" y="0" width="1" height="1" fill="#3A3A3F"/><rect x="304" y="2" width="1" height="1" fill="#505055"/><rect x="306" y="4" width="1" height="1" fill="#414146"/><rect x="310" y="0" width="1" height="1" fill="#3A3A3F"/><rect x="308" y="2" width="1" height="1" fill="#505055"/><rect x="310" y="4" width="1" height="1" fill="#414146"/><rect x="314" y="0" width="1" height="1" fill="#3A3A3F"/><rect x="312" y="2" width="1" height="1" fill="#505055"/><rect x="314" y="4" width="1" height="1" fill="#414146"/><rect x="318" y="0" width="1" height="1" fill="#3A3A3F"/><rect x="316" y="2" width="1" height="1" fill="#505055"/><rect x="318" y="4" width="1" height="1" fill="#414146"/><rect x="322" y="0" width="1" height="1" fill="#3A3A3F"/><rect x="320" y="2" width="1" height="1" fill="#505055"/><rect x="322" y="4" width="1" height="1" fill="#414146"/><rect x="326" y="0" width="1" height="1" fill="#3A3A3F"/><rect x="324" y="2" width="1" height="1" fill="#505055"/><rect x="326" y="4" width="1" height="1" fill="#414146"/><rect x="330" y="0" width="1" height="1" fill="#3A3A3F"/><rect x="328" y="2" width="1" height="1" fill="#505055"/><rect x="330" y="4" width="1" height="1" fill="#414146"/><rect x="334" y="0" width="1" height="1" fill="#3A3A3F"/><rect x="332" y="2" width="1" height="1" fill="#505055"/><rect x="334" y="4" width="1" height="1" fill="#414146"/><rect x="338" y="0" width="1" height="1" fill="#3A3A3F"/><rect x="336" y="2" width="1" height="1" fill="#505055"/><rect x="338" y="4" width="1" height="1" fill="#414146"/><rect x="342" y="0" width="1" height="1" fill="#3A3A3F"/><rect x="340" y="2" width="1" height="1" fill="#505055"/><rect x="342" y="4" width="1" height="1" fill="#414146"/><rect x="346" y="0" width="1" height="1" fill="#3A3A3F"/><rect x="344" y="2" width="1" height="1" fill="#505055"/><rect x="346" y="4" width="1" height="1" fill="#414146"/><rect x="350" y="0" width="1" height="1" fill="#3A3A3F"/><rect x="348" y="2" width="1" height="1" fill="#505055"/><rect x="350" y="4" width="1" height="1" fill="#414146"/><rect x="354" y="0" width="1" height="1" fill="#3A3A3F"/><rect x="352" y="2" width="1" height="1" fill="#505055"/><rect x="354" y="4" width="1" height="1" fill="#414146"/><rect x="358" y="0" width="1" height="1" fill="#3A3A3F"/><rect x="356" y="2" width="1" height="1" fill="#505055"/><rect x="358" y="4" width="1" height="1" fill="#414146"/><rect x="362" y="0" width="1" height="1" fill="#3A3A3F"/><rect x="360" y="2" width="1" height="1" fill="#505055"/><rect x="362" y="4" width="1" height="1" fill="#414146"/><rect x="366" y="0" width="1" height="1" fill="#3A3A3F"/><rect x="364" y="2" width="1" height="1" fill="#505055"/><rect x="366" y="4" width="1" height="1" fill="#414146"/><rect x="370" y="0" width="1" height="1" fill="#3A3A3F"/><rect x="368" y="2" width="1" height="1" fill="#505055"/><rect x="370" y="4" width="1" height="1" fill="#414146"/><rect x="374" y="0" width="1" height="1" fill="#3A3A3F"/><rect x="372" y="2" width="1" height="1" fill="#505055"/><rect x="374" y="4" width="1" height="1" fill="#414146"/><rect x="378" y="0" width="1" height="1" fill="#3A3A3F"/><rect x="376" y="2" width="1" height="1" fill="#505055"/><rect x="378" y="4" width="1" height="1" fill="#414146"/><rect x="382" y="0" width="1" height="1" fill="#3A3A3F"/><rect x="380" y="2" width="1" height="1" fill="#505055"/><rect x="382" y="4" width="1" height="1" fill="#414146"/><rect x="386" y="0" width="1" height="1" fill="#3A3A3F"/><rect x="384" y="2" width="1" height="1" fill="#505055"/><rect x="386" y="4" width="1" height="1" fill="#414146"/><rect x="390" y="0" width="1" height="1" fill="#3A3A3F"/><rect x="388" y="2" width="1" height="1" fill="#505055"/><rect x="390" y="4" width="1" height="1" fill="#414146"/><rect x="394" y="0" width="1" height="1" fill="#3A3A3F"/><rect x="392" y="2" width="1" height="1" fill="#505055"/><rect x="394" y="4" width="1" height="1" fill="#414146"/><rect x="398" y="0" width="1" height="1" fill="#3A3A3F"/><rect x="396" y="2" width="1" height="1" fill="#505055"/><rect x="398" y="4" width="1" height="1" fill="#414146"/><rect x="402" y="0" width="1" height="1" fill="#3A3A3F"/><rect x="400" y="2" width="1" height="1" fill="#505055"/><rect x="402" y="4" width="1" height="1" fill="#414146"/><rect x="406" y="0" width="1" height="1" fill="#3A3A3F"/><rect x="404" y="2" width="1" height="1" fill="#505055"/><rect x="406" y="4" width="1" height="1" fill="#414146"/><rect x="410" y="0" width="1" height="1" fill="#3A3A3F"/><rect x="408" y="2" width="1" height="1" fill="#505055"/><rect x="410" y="4" width="1" height="1" fill="#414146"/><rect x="414" y="0" width="1" height="1" fill="#3A3A3F"/><rect x="412" y="2" width="1" height="1" fill="#505055"/><rect x="414" y="4" width="1" height="1" fill="#414146"/><rect x="418" y="0" width="1" height="1" fill="#3A3A3F"/><rect x="416" y="2" width="1" height="1" fill="#505055"/><rect x="418" y="4" width="1" height="1" fill="#414146"/><rect x="422" y="0" width="1" height="1" fill="#3A3A3F"/><rect x="420" y="2" width="1" height="1" fill="#505055"/><rect x="422" y="4" width="1" height="1" fill="#414146"/><rect x="426" y="0" width="1" height="1" fill="#3A3A3F"/><rect x="424" y="2" width="1" height="1" fill="#505055"/><rect x="426" y="4" width="1" height="1" fill="#414146"/><rect x="430" y="0" width="1" height="1" fill="#3A3A3F"/><rect x="428" y="2" width="1" height="1" fill="#505055"/><rect x="430" y="4" width="1" height="1" fill="#414146"/><rect x="434" y="0" width="1" height="1" fill="#3A3A3F"/><rect x="432" y="2" width="1" height="1" fill="#505055"/><rect x="434" y="4" width="1" height="1" fill="#414146"/><rect x="438" y="0" width="1" height="1" fill="#3A3A3F"/><rect x="436" y="2" width="1" height="1" fill="#505055"/><rect x="438" y="4" width="1" height="1" fill="#414146"/><rect x="442" y="0" width="1" height="1" fill="#3A3A3F"/><rect x="440" y="2" width="1" height="1" fill="#505055"/><rect x="442" y="4" width="1" height="1" fill="#414146"/><rect x="446" y="0" width="1" height="1" fill="#3A3A3F"/><rect x="444" y="2" width="1" height="1" fill="#505055"/><rect x="446" y="4" width="1" height="1" fill="#414146"/><rect x="450" y="0" width="1" height="1" fill="#3A3A3F"/><rect x="448" y="2" width="1" height="1" fill="#505055"/><rect x="450" y="4" width="1" height="1" fill="#414146"/><rect x="454" y="0" width="1" height="1" fill="#3A3A3F"/><rect x="452" y="2" width="1" height="1" fill="#505055"/><rect x="454" y="4" width="1" height="1" fill="#414146"/><rect x="458" y="0" width="1" height="1" fill="#3A3A3F"/><rect x="456" y="2" width="1" height="1" fill="#505055"/><rect x="458" y="4" width="1" height="1" fill="#414146"/><rect x="462" y="0" width="1" height="1" fill="#3A3A3F"/><rect x="460" y="2" width="1" height="1" fill="#505055"/><rect x="462" y="4" width="1" height="1" fill="#414146"/><rect x="466" y="0" width="1" height="1" fill="#3A3A3F"/><rect x="464" y="2" width="1" height="1" fill="#505055"/><rect x="466" y="4" width="1" height="1" fill="#414146"/><rect x="470" y="0" width="1" height="1" fill="#3A3A3F"/><rect x="468" y="2" width="1" height="1" fill="#505055"/><rect x="470" y="4" width="1" height="1" fill="#414146"/><rect x="474" y="0" width="1" height="1" fill="#3A3A3F"/><rect x="472" y="2" width="1" height="1" fill="#505055"/><rect x="474" y="4" width="1" height="1" fill="#414146"/><rect x="478" y="0" width="1" height="1" fill="#3A3A3F"/><rect x="476" y="2" width="1" height="1" fill="#505055"/><rect x="478" y="4" width="1" height="1" fill="#414146"/><rect x="482" y="0" width="1" height="1" fill="#3A3A3F"/><rect x="480" y="2" width="1" height="1" fill="#505055"/><rect x="482" y="4" width="1" height="1" fill="#414146"/><rect x="486" y="0" width="1" height="1" fill="#3A3A3F"/><rect x="484" y="2" width="1" height="1" fill="#505055"/><rect x="486" y="4" width="1" height="1" fill="#414146"/><rect x="490" y="0" width="1" height="1" fill="#3A3A3F"/><rect x="488" y="2" width="1" height="1" fill="#505055"/><rect x="490" y="4" width="1" height="1" fill="#414146"/><rect x="494" y="0" width="1" height="1" fill="#3A3A3F"/><rect x="492" y="2" width="1" height="1" fill="#505055"/><rect x="494" y="4" width="1" height="1" fill="#414146"/><rect x="498" y="0" width="1" height="1" fill="#3A3A3F"/><rect x="496" y="2" width="1" height="1" fill="#505055"/><rect x="498" y="4" width="1" height="1" fill="#414146"/><rect x="502" y="0" width="1" height="1" fill="#3A3A3F"/><rect x="500" y="2" width="1" height="1" fill="#505055"/><rect x="502" y="4" width="1" height="1" fill="#414146"/><rect x="506" y="0" width="1" height="1" fill="#3A3A3F"/><rect x="504" y="2" width="1" height="1" fill="#505055"/><rect x="506" y="4" width="1" height="1" fill="#414146"/><rect x="510" y="0" width="1" height="1" fill="#3A3A3F"/><rect x="508" y="2" width="1" height="1" fill="#505055"/><rect x="510" y="4" width="1" height="1" fill="#414146"/><rect x="514" y="0" width="1" height="1" fill="#3A3A3F"/><rect x="512" y="2" width="1" height="1" fill="#505055"/><rect x="514" y="4" width="1" height="1" fill="#414146"/><rect x="518" y="0" width="1" height="1" fill="#3A3A3F"/><rect x="516" y="2" width="1" height="1" fill="#505055"/><rect x="518" y="4" width="1" height="1" fill="#414146"/><rect x="522" y="0" width="1" height="1" fill="#3A3A3F"/><rect x="520" y="2" width="1" height="1" fill="#505055"/><rect x="522" y="4" width="1" height="1" fill="#414146"/><rect x="526" y="0" width="1" height="1" fill="#3A3A3F"/><rect x="524" y="2" width="1" height="1" fill="#505055"/><rect x="526" y="4" width="1" height="1" fill="#414146"/><rect x="530" y="0" width="1" height="1" fill="#3A3A3F"/><rect x="528" y="2" width="1" height="1" fill="#505055"/><rect x="530" y="4" width="1" height="1" fill="#414146"/><rect x="534" y="0" width="1" height="1" fill="#3A3A3F"/><rect x="532" y="2" width="1" height="1" fill="#505055"/><rect x="534" y="4" width="1" height="1" fill="#414146"/><rect x="538" y="0" width="1" height="1" fill="#3A3A3F"/><rect x="536" y="2" width="1" height="1" fill="#505055"/><rect x="538" y="4" width="1" height="1" fill="#414146"/><rect x="542" y="0" width="1" height="1" fill="#3A3A3F"/><rect x="540" y="2" width="1" height="1" fill="#505055"/><rect x="542" y="4" width="1" height="1" fill="#414146"/><rect x="546" y="0" width="1" height="1" fill="#3A3A3F"/><rect x="544" y="2" width="1" height="1" fill="#505055"/><rect x="546" y="4" width="1" height="1" fill="#414146"/><rect x="550" y="0" width="1" height="1" fill="#3A3A3F"/><rect x="548" y="2" width="1" height="1" fill="#505055"/><rect x="550" y="4" width="1" height="1" fill="#414146"/><rect x="554" y="0" width="1" height="1" fill="#3A3A3F"/><rect x="552" y="2" width="1" height="1" fill="#505055"/><rect x="554" y="4" width="1" height="1" fill="#414146"/><rect x="558" y="0" width="1" height="1" fill="#3A3A3F"/><rect x="556" y="2" width="1" height="1" fill="#505055"/><rect x="558" y="4" width="1" height="1" fill="#414146"/><rect x="562" y="0" width="1" height="1" fill="#3A3A3F"/><rect x="560" y="2" width="1" height="1" fill="#505055"/><rect x="562" y="4" width="1" height="1" fill="#414146"/><rect x="566" y="0" width="1" height="1" fill="#3A3A3F"/><rect x="564" y="2" width="1" height="1" fill="#505055"/><rect x="566" y="4" width="1" height="1" fill="#414146"/><rect x="570" y="0" width="1" height="1" fill="#3A3A3F"/><rect x="568" y="2" width="1" height="1" fill="#505055"/><rect x="570" y="4" width="1" height="1" fill="#414146"/><rect x="574" y="0" width="1" height="1" fill="#3A3A3F"/><rect x="572" y="2" width="1" height="1" fill="#505055"/><rect x="574" y="4" width="1" height="1" fill="#414146"/><rect x="578" y="0" width="1" height="1" fill="#3A3A3F"/><rect x="576" y="2" width="1" height="1" fill="#505055"/><rect x="578" y="4" width="1" height="1" fill="#414146"/><rect x="582" y="0" width="1" height="1" fill="#3A3A3F"/><rect x="580" y="2" width="1" height="1" fill="#505055"/><rect x="582" y="4" width="1" height="1" fill="#414146"/><rect x="586" y="0" width="1" height="1" fill="#3A3A3F"/><rect x="584" y="2" width="1" height="1" fill="#505055"/><rect x="586" y="4" width="1" height="1" fill="#414146"/></svg>
<svg style="left:681px;top:870px" width="8" height="4" viewBox="0 0 8 4"><path d="M0 0H8L4.0 4Z" fill="#F1F1F1"/></svg>
<svg style="left:697px;top:867px" width="8" height="12" viewBox="0 0 8 12"><path d="M1.5 0.5H6.5V7.5H1.5Z" fill="none" stroke="#F1F1F1" stroke-width="1.2"/><rect x="0" y="7" width="8" height="1.3" fill="#F1F1F1"/><rect x="3.4" y="8" width="1.2" height="4" fill="#F1F1F1"/></svg>
<svg style="left:713px;top:869px" width="10" height="8" viewBox="0 0 10 8"><path d="M0.5 0.3L9.5 7.7M9.5 0.3L0.5 7.7" stroke="#F1F1F1" stroke-width="1.4"/></svg>
<div class="a" style="left:32px;top:883px;width:697px;height:21px;background:#2D2D30;"></div>
<div class="a" style="left:39px;top:886px;width:683px;height:18px;border:1px solid #3F3F46;background:#333337;"></div>
<div class="t" style="left:43px;top:888px;color:#F1F1F1;">Comments</div>
<svg style="left:712px;top:894px" width="5" height="3" viewBox="0 0 5 3"><path d="M0 0H5L2.5 3Z" fill="#999999"/></svg>
<div class="a" style="left:32px;top:904px;width:697px;height:26px;background:#252526;"></div>
<div class="a" style="left:32px;top:930px;width:697px;height:1px;background:#3F3F46;"></div>
<div class="a" style="left:51px;top:905px;width:1px;height:25px;background:#3F3F46;"></div>
<div class="a" style="left:538px;top:905px;width:1px;height:25px;background:#3F3F46;"></div>
<div class="a" style="left:658px;top:905px;width:1px;height:25px;background:#3F3F46;"></div>
<div class="t" style="left:37px;top:912px;color:#F1F1F1;">!</div>
<div class="t" style="left:57px;top:912px;color:#F1F1F1;">Description</div>
<svg style="left:127px;top:916px" width="9" height="5" viewBox="0 0 9 5"><path d="M0 0H9L4.5 5Z" fill="#F1F1F1"/></svg>
<div class="t" style="left:544px;top:912px;color:#F1F1F1;">File</div>
<div class="t" style="left:664px;top:912px;color:#F1F1F1;">Line</div>
<div class="t" style="left:36px;top:1003px;color:#F1F1F1;">Error List</div>
<div class="a" style="left:88px;top:999px;width:56px;height:21px;border:1px solid #3F3F46;background:#252526;border-top:none"></div>
<div class="a" style="left:89px;top:999px;width:54px;height:1px;background:#252526;"></div>
<div class="t" style="left:93px;top:1002px;color:#3399FF;">Task List</div>
<div class="t" style="left:149px;top:1003px;color:#F1F1F1;">Output</div>
<div class="t" style="left:197px;top:1003px;color:#F1F1F1;">Find Symbol Results</div>
<div class="a" style="left:736px;top:84px;width:193px;height:936px;background:#252526;"></div>
<div class="a" style="left:736px;top:84px;width:193px;height:73px;background:#2D2D30;"></div>
<div class="a" style="left:736px;top:84px;width:193px;height:936px;border:1px solid #3F3F46;background:transparent;"></div>
<div class="a" style="left:737px;top:956px;width:191px;height:1px;background:#3F3F46;"></div>
<div class="t" style="left:741px;top:89px;color:#F1F1F1;">Properties</div>
<svg style="left:801px;top:93px" width="74" height="5" viewBox="0 0 74 5"><rect x="2" y="0" width="1" height="1" fill="#3A3A3F"/><rect x="0" y="2" width="1" height="1" fill="#505055"/><rect x="2" y="4" width="1" height="1" fill="#414146"/><rect x="6" y="0" width="1" height="1" fill="#3A3A3F"/><rect x="4" y="2" width="1" height="1" fill="#505055"/><rect x="6" y="4" width="1" height="1" fill="#414146"/><rect x="10" y="0" width="1" height="1" fill="#3A3A3F"/><rect x="8" y="2" width="1" height="1" fill="#505055"/><rect x="10" y="4" width="1" height="1" fill="#414146"/><rect x="14" y="0" width="1" height="1" fill="#3A3A3F"/><rect x="12" y="2" width="1" height="1" fill="#505055"/><rect x="14" y="4" width="1" height="1" fill="#414146"/><rect x="18" y="0" width="1" height="1" fill="#3A3A3F"/><rect x="16" y="2" width="1" height="1" fill="#505055"/><rect x="18" y="4" width="1" height="1" fill="#414146"/><rect x="22" y="0" width="1" height="1" fill="#3A3A3F"/><rect x="20" y="2" width="1" height="1" fill="#505055"/><rect x="22" y="4" width="1" height="1" fill="#414146"/><rect x="26" y="0" width="1" height="1" fill="#3A3A3F"/><rect x="24" y="2" width="1" height="1" fill="#505055"/><rect x="26" y="4" width="1" height="1" fill="#414146"/><rect x="30" y="0" width="1" height="1" fill="#3A3A3F"/><rect x="28" y="2" width="1" height="1" fill="#505055"/><rect x="30" y="4" width="1" height="1" fill="#414146"/><rect x="34" y="0" width="1" height="1" fill="#3A3A3F"/><rect x="32" y="2" width="1" height="1" fill="#505055"/><rect x="34" y="4" width="1" height="1" fill="#414146"/><rect x="38" y="0" width="1" height="1" fill="#3A3A3F"/><rect x="36" y="2" width="1" height="1" fill="#505055"/><rect x="38" y="4" width="1" height="1" fill="#414146"/><rect x="42" y="0" width="1" height="1" fill="#3A3A3F"/><rect x="40" y="2" width="1" height="1" fill="#505055"/><rect x="42" y="4" width="1" height="1" fill="#414146"/><rect x="46" y="0" width="1" height="1" fill="#3A3A3F"/><rect x="44" y="2" width="1" height="1" fill="#505055"/><rect x="46" y="4" width="1" height="1" fill="#414146"/><rect x="50" y="0" width="1" height="1" fill="#3A3A3F"/><rect x="48" y="2" width="1" height="1" fill="#505055"/><rect x="50" y="4" width="1" height="1" fill="#414146"/><rect x="54" y="0" width="1" height="1" fill="#3A3A3F"/><rect x="52" y="2" width="1" height="1" fill="#505055"/><rect x="54" y="4" width="1" height="1" fill="#414146"/><rect x="58" y="0" width="1" height="1" fill="#3A3A3F"/><rect x="56" y="2" width="1" height="1" fill="#505055"/><rect x="58" y="4" width="1" height="1" fill="#414146"/><rect x="62" y="0" width="1" height="1" fill="#3A3A3F"/><rect x="60" y="2" width="1" height="1" fill="#505055"/><rect x="62" y="4" width="1" height="1" fill="#414146"/><rect x="66" y="0" width="1" height="1" fill="#3A3A3F"/><rect x="64" y="2" width="1" height="1" fill="#505055"/><rect x="66" y="4" width="1" height="1" fill="#414146"/><rect x="70" y="0" width="1" height="1" fill="#3A3A3F"/><rect x="68" y="2" width="1" height="1" fill="#505055"/><rect x="70" y="4" width="1" height="1" fill="#414146"/><rect x="74" y="0" width="1" height="1" fill="#3A3A3F"/><rect x="72" y="2" width="1" height="1" fill="#505055"/><rect x="74" y="4" width="1" height="1" fill="#414146"/></svg>
<svg style="left:880px;top:93px" width="8" height="4" viewBox="0 0 8 4"><path d="M0 0H8L4.0 4Z" fill="#F1F1F1"/></svg>
<svg style="left:897px;top:90px" width="8" height="12" viewBox="0 0 8 12"><path d="M1.5 0.5H6.5V7.5H1.5Z" fill="none" stroke="#F1F1F1" stroke-width="1.2"/><rect x="0" y="7" width="8" height="1.3" fill="#F1F1F1"/><rect x="3.4" y="8" width="1.2" height="4" fill="#F1F1F1"/></svg>
<svg style="left:912px;top:91px" width="10" height="8" viewBox="0 0 10 8"><path d="M0.5 0.3L9.5 7.7M9.5 0.3L0.5 7.7" stroke="#F1F1F1" stroke-width="1.4"/></svg>
<div class="a" style="left:737px;top:130px;width:191px;height:1px;background:#252526;"></div>
<svg style="left:918px;top:117px" width="6" height="3" viewBox="0 0 6 3"><path d="M0 0H6L3.0 3Z" fill="#F1F1F1"/></svg>
<svg style="left:744px;top:136px" width="15" height="15" viewBox="0 0 15 15"><g fill="#D4D4D4"><rect x="0" y="0" width="5" height="5"/><rect x="0" y="9" width="5" height="5"/><rect x="6" y="0" width="6" height="1"/><rect x="6" y="2" width="6" height="1"/><rect x="6" y="4" width="6" height="1"/><rect x="6" y="6" width="6" height="1"/><rect x="6" y="9" width="6" height="1"/><rect x="6" y="12" width="6" height="1"/><rect x="13" y="2" width="2" height="1"/><rect x="13" y="4" width="2" height="1"/><rect x="13" y="6" width="2" height="1"/><rect x="13" y="13" width="2" height="1"/></g><g fill="#2D2D30"><rect x="2" y="1" width="1" height="3"/><rect x="1" y="2" width="3" height="1"/><rect x="2" y="10" width="1" height="3"/><rect x="1" y="11" width="3" height="1"/></g></svg>
<div class="a" style="left:763px;top:132px;width:23px;height:22px;border:1px solid #3A7BC8;background:#2D2D30;"></div>
<svg style="left:767px;top:136px" width="15" height="15" viewBox="0 0 15 15"><rect x="0" y="0" width="7" height="7" fill="#D4D4D4"/><path d="M1.3 6.3L3.5 0.8L5.7 6.3M2.2 4.3H4.8" fill="none" stroke="#2D2D30" stroke-width="1.1"/><path d="M1 8.5H6L1.2 13.5H6.2" fill="none" stroke="#D4D4D4" stroke-width="1.4"/><path d="M11 4V12M8 9L11 12.3L14 9" fill="none" stroke="#54B7F0" stroke-width="1.8"/></svg>
<svg style="left:796px;top:135px" width="15" height="16" viewBox="0 0 15 16"><path d="M4.5 3.5L7.5 0.8H12.5L14.2 2.5V8.5L10 11.8H7.5L4.5 14.8H1.5L0 13V10.5L4.5 6.5Z" fill="#8C8C8E"/><circle cx="10.5" cy="4.5" r="1.6" fill="#6E6E70"/></svg>
<div class="a" style="left:929px;top:84px;width:31px;height:942px;background:#2D2D30;"></div>
<div class="a" style="left:954px;top:84px;width:6px;height:74px;background:#3F3F46;"></div>
<div class="vt" style="left:951px;top:85px;color:#F1F1F1;letter-spacing:-0.2px">Code Analysis</div>
<div class="a" style="left:954px;top:168px;width:6px;height:78px;background:#3F3F46;"></div>
<div class="vt" style="left:951px;top:169px;color:#F1F1F1;letter-spacing:-0.2px">Team Explorer</div>
<div class="a" style="left:954px;top:256px;width:6px;height:57px;background:#3F3F46;"></div>
<div class="vt" style="left:951px;top:257px;color:#F1F1F1;letter-spacing:-0.2px">Class View</div>
<div class="a" style="left:954px;top:323px;width:6px;height:45px;background:#3F3F46;"></div>
<div class="vt" style="left:951px;top:324px;color:#F1F1F1;letter-spacing:-0.2px">Toolbox</div>
<div class="a" style="left:0px;top:1026px;width:961px;height:21px;background:#007ACC;"></div>
<div class="t" style="left:3px;top:1031px;color:#FFFFFF;">Item(s) Saved</div>
<div class="t" style="left:587px;top:1031px;color:#FFFFFF;">Ln 7</div>
<div class="t" style="left:679px;top:1031px;color:#FFFFFF;">Col 5</div>
<div class="t" style="left:771px;top:1031px;color:#FFFFFF;">Ch 2</div>
<div class="t" style="left:907px;top:1031px;color:#FFFFFF;">INS</div>
<svg style="left:948px;top:1037px" width="8" height="8" viewBox="0 0 8 8"><g fill="#8CC4EC"><rect x="6" y="0" width="1" height="1"/><rect x="4" y="2" width="1" height="1"/><rect x="6" y="2" width="1" height="1"/><rect x="2" y="4" width="1" height="1"/><rect x="4" y="4" width="1" height="1"/><rect x="6" y="4" width="1" height="1"/><rect x="0" y="6" width="1" height="1"/><rect x="2" y="6" width="1" height="1"/><rect x="4" y="6" width="1" height="1"/><rect x="6" y="6" width="1" height="1"/></g></svg>
<div class="a" style="left:960px;top:0px;width:1px;height:1047px;background:#007ACC;"></div>
</body></html>
